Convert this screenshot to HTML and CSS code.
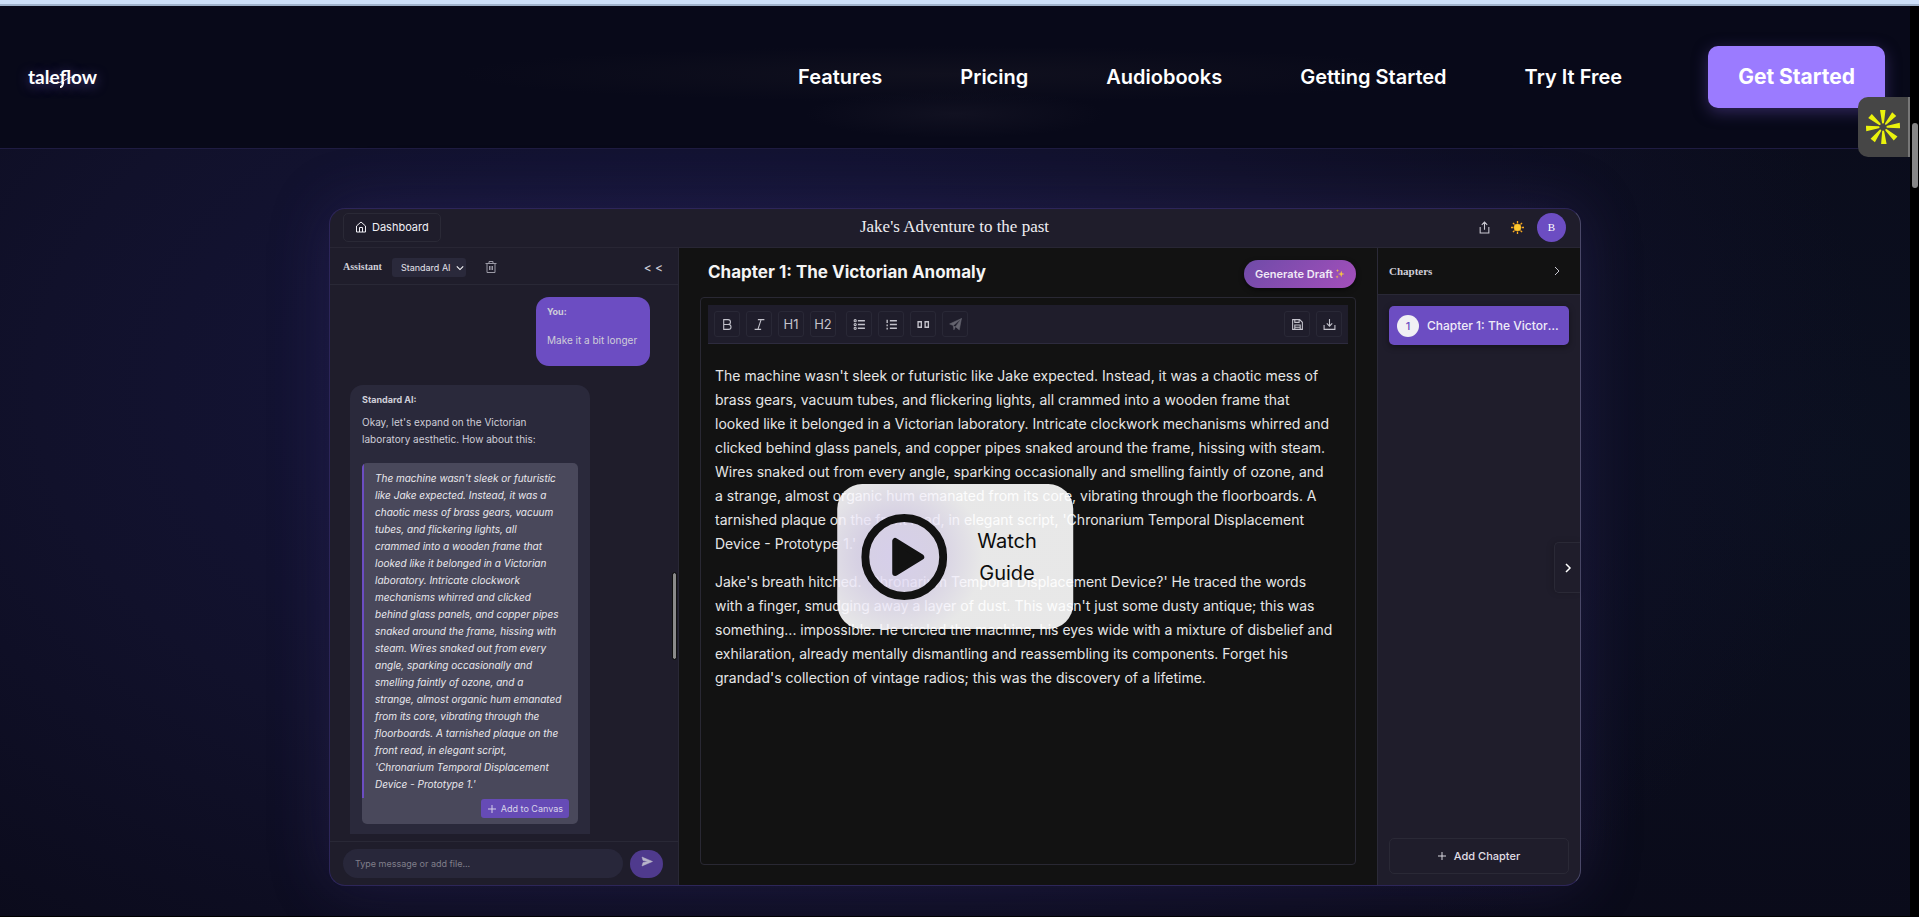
FILE: index.html
```html
<!DOCTYPE html>
<html lang="en">
<head>
<meta charset="utf-8">
<title>Taleflow</title>
<link rel="stylesheet" href="styles.css">
</head>
<body>
<div class="browser-edge"></div>
<div class="viewport">
<div class="page">
  <header class="site-nav">
    <a class="logo" href="#">taleflow<svg class="logo-swoosh" viewBox="0 0 30 14" aria-hidden="true"><path d="M1 6C7 9 12 8 17 5S24 2 27 2" fill="none" stroke="#fff" stroke-width="1"/><path d="M15 7c0 3-1 5-3 5" fill="none" stroke="#fff" stroke-width="2"/></svg></a>
    <nav class="nav-links">
      <a href="#">Features</a>
      <a href="#">Pricing</a>
      <a href="#">Audiobooks</a>
      <a href="#">Getting Started</a>
      <a href="#">Try It Free</a>
    </nav>
    <a class="get-started" href="#">Get Started</a>
  </header>

  <button class="widget" aria-label="Open widget">
    <svg viewBox="0 0 34 34" width="34" height="34" aria-hidden="true"><g fill="#eaf20c"><path id="ray" d="M14 0h5.500l-1.500 12.500c-.1 1.400-1.800 1.400-2 .2z"/><use href="#ray" transform="rotate(42 17 17)"/><use href="#ray" transform="rotate(86 17 17)"/><use href="#ray" transform="rotate(133 17 17)"/><use href="#ray" transform="rotate(178 17 17)"/><use href="#ray" transform="rotate(218 17 17)"/><use href="#ray" transform="rotate(266 17 17)"/><use href="#ray" transform="rotate(311 17 17)"/></g></svg>
  </button>

  <main class="hero">
    <section class="app">
      <div class="app-bar">
        <button class="dashboard"><svg viewBox="0 0 24 24" class="i12"><path d="M3 10 12 2l9 8v12H3zM9 22v-9h6v9"/></svg>Dashboard</button>
        <h2 class="book-title">Jake's Adventure to the past</h2>
        <div class="bar-actions">
          <button class="plain" aria-label="Share"><svg viewBox="0 0 24 24" class="i14"><path d="M4 11v11h16V11M12 16V2M7 7l5-5 5 5"/></svg></button>
          <button class="plain" aria-label="Light theme"><svg viewBox="0 0 24 24" class="i14"><g stroke="#f6a821" stroke-width="2.400"><path d="M12 0v4M12 20v4M0 12h4M20 12h4M3.500 3.500l3 3M17.500 17.500l3 3M20.500 3.500l-3 3M6.500 17.500l-3 3"/></g><circle cx="12" cy="12" r="6.500" fill="#fdc92f" stroke="#f8b023" stroke-width="1"/></svg></button>
          <span class="avatar">B</span>
        </div>
      </div>

      <div class="app-body">
        <aside class="assistant">
          <div class="assistant-head">
            <label class="serif-label" for="model">Assistant</label>
            <div class="select-wrap">
              <select id="model"><option>Standard AI</option></select>
              <svg viewBox="0 0 10 10" class="i8"><path d="M1 3l4 4 4-4" stroke-width="1.300"/></svg>
            </div>
            <button class="plain trash" aria-label="Clear chat"><svg viewBox="0 0 24 24" class="i12"><path d="M1 5h22M8 5V1h8v4M4 5v18h16V5M9 10v8M12 10v8M15 10v8"/></svg></button>
            <button class="plain collapse">&lt; &lt;</button>
          </div>
          <div class="chat">
            <div class="msg-user"><strong>You:</strong><p>Make it a bit longer</p></div>
            <div class="msg-ai">
              <strong>Standard AI:</strong>
              <p>Okay, let's expand on the Victorian<br>laboratory aesthetic. How about this:</p>
              <div class="quote">
                <blockquote>The machine wasn't sleek or futuristic<br>like Jake expected. Instead, it was a<br>chaotic mess of brass gears, vacuum<br>tubes, and flickering lights, all<br>crammed into a wooden frame that<br>looked like it belonged in a Victorian<br>laboratory. Intricate clockwork<br>mechanisms whirred and clicked<br>behind glass panels, and copper pipes<br>snaked around the frame, hissing with<br>steam. Wires snaked out from every<br>angle, sparking occasionally and<br>smelling faintly of ozone, and a<br>strange, almost organic hum emanated<br>from its core, vibrating through the<br>floorboards. A tarnished plaque on the<br>front read, in elegant script,<br>'Chronarium Temporal Displacement<br>Device - Prototype 1.'</blockquote>
                <button class="add-canvas"><svg viewBox="0 0 10 10" class="i8"><path d="M5 0v10M0 5h10" stroke-width="1.200"/></svg>Add to Canvas</button>
              </div>
            </div>
            <span class="chat-scroll"></span>
          </div>
          <form class="composer">
            <input type="text" placeholder="Type message or add file..." aria-label="Message">
            <button type="button" aria-label="Send"><svg viewBox="0 0 24 24" class="i12"><path d="M2 2l21 9L2 20l2-7 10-2L4 9z" fill="currentColor" stroke-width="1"/></svg></button>
          </form>
        </aside>

        <section class="editor">
          <div class="editor-head">
            <h1>Chapter 1: The Victorian Anomaly</h1>
            <button class="generate">Generate Draft <svg viewBox="0 0 12 12" class="i10"><g fill="#f5c344" stroke="none"><path d="M7.500 2l1 3 3 1-3 1-1 3-1-3-3-1 3-1z"/><path d="M3 0l.5 1.500L5 2l-1.500.5L3 4l-.5-1.500L1 2l1.500-.5zM2.500 7.500l.5 1.500 1.500.5L3 10l-.5 1.500L2 10 .5 9.500 2 9z"/></g></svg></button>
          </div>
          <div class="sheet">
            <div class="toolbar">
              <div class="tools">
                <button aria-label="Bold"><svg viewBox="0 0 24 24" class="i14"><path d="M5 3h8a4.500 4.500 0 010 9H5zM5 12h9a4.500 4.500 0 010 9H5z"/></svg></button>
                <button aria-label="Italic"><svg viewBox="0 0 24 24" class="i14"><path d="M9 3h12M3 21h12M15 3L9 21"/></svg></button>
                <button>H1</button>
                <button>H2</button>
              </div>
              <div class="tools">
                <button aria-label="Bullet list"><svg viewBox="0 0 24 24" class="i14"><path d="M9 5h13M9 12h13M9 19h13" stroke-width="2.500"/><circle cx="4" cy="5" r="2"/><circle cx="4" cy="12" r="2"/><circle cx="4" cy="19" r="2"/></svg></button>
                <button aria-label="Numbered list"><svg viewBox="0 0 24 24" class="i14"><path d="M9 5h13M9 12h13M9 19h13" stroke-width="2.500"/><path d="M4 3v6M4 12v3M4 18v3" stroke-width="2.500"/></svg></button>
                <button aria-label="Quote"><svg viewBox="0 0 24 24" class="i14"><path d="M2 7h6v10H2zM15 7h6v10h-6z" stroke-width="2.500"/></svg></button>
                <button class="dim" aria-label="Send selection"><svg viewBox="0 0 24 24" class="i14"><path d="M23 1L1 11l7 3zM23 1l-4 21-7-6zM8 14l1 8 3-6" fill="currentColor" stroke-width="1"/></svg></button>
              </div>
              <div class="tools tools-end">
                <button aria-label="Save"><svg viewBox="0 0 24 24" class="i14"><path d="M3 3h13l5 5v13H3zM7 3v5h8V3M7 21v-8h10v8M7 17h10"/></svg></button>
                <button aria-label="Download"><svg viewBox="0 0 24 24" class="i14"><path d="M2 13v8h20v-8M12 2v13M7 10l5 5 5-5"/></svg></button>
              </div>
            </div>
            <article class="prose">
              <p>The machine wasn't sleek or futuristic like Jake expected. Instead, it was a chaotic mess of<br>brass gears, vacuum tubes, and flickering lights, all crammed into a wooden frame that<br>looked like it belonged in a Victorian laboratory. Intricate clockwork mechanisms whirred and<br>clicked behind glass panels, and copper pipes snaked around the frame, hissing with steam.<br>Wires snaked out from every angle, sparking occasionally and smelling faintly of ozone, and<br>a strange, almost organic hum emanated from its core, vibrating through the floorboards. A<br>tarnished plaque on the front read, in elegant script, 'Chronarium Temporal Displacement<br>Device - Prototype 1.'</p>
              <p>Jake's breath hitched. 'Chronarium Temporal Displacement Device?' He traced the words<br>with a finger, smudging away a layer of dust. This wasn't just some dusty antique; this was<br>something... impossible. He circled the machine, his eyes wide with a mixture of disbelief and<br>exhilaration, already mentally dismantling and reassembling its components. Forget his<br>grandad's collection of vintage radios; this was the discovery of a lifetime.</p>
            </article>
          </div>
        </section>

        <aside class="chapters">
          <div class="chapters-head"><span class="serif-label">Chapters</span><button class="plain" aria-label="Hide chapters"><svg viewBox="0 0 10 10" class="i10"><path d="M3 1l4 4-4 4" stroke-width="1"/></svg></button></div>
          <button class="chapter"><span class="chapter-no">1</span><span class="chapter-name">Chapter 1: The Victorian Anomaly</span></button>
          <button class="add-chapter"><svg viewBox="0 0 10 10" class="i8"><path d="M5 0v10M0 5h10" stroke-width="1.200"/></svg>Add Chapter</button>
          <button class="drawer-tab" aria-label="Toggle drawer"><svg viewBox="0 0 10 10" class="i10"><path d="M3 1l4 4-4 4" stroke-width="1.500"/></svg></button>
        </aside>
      </div>

      <button class="watch">
        <svg class="play" viewBox="0 0 86 86" aria-hidden="true"><circle cx="43" cy="43" r="39" fill="none" stroke="#121212" stroke-width="8"/><path d="M34 27v32l26-16z" fill="#121212" stroke="#121212" stroke-width="6" stroke-linejoin="round"/></svg>
        <span>Watch<br>Guide</span>
      </button>
    </section>
  </main>
</div>
<div class="scroll-track"><span class="scroll-thumb"></span></div>
</div>
</body>
</html>
```

FILE: styles.css
```css
* { box-sizing: border-box; }

body {
  margin: 0;
  height: 100vh;
  overflow: hidden;
  display: flex;
  flex-direction: column;
  background: #000;
  color: #fff;
  font-family: Inter, "Liberation Sans", sans-serif;
}

h1, h2, p, blockquote { margin: 0; }
button, input, select { font: inherit; color: inherit; margin: 0; }
button { cursor: pointer; padding: 0; border: 0; background: none; }
svg { display: block; fill: none; stroke: currentColor; stroke-width: 2; }
.widget svg, .play { stroke: none; }
.i8 { width: 8px; height: 8px; }
.i10 { width: 10px; height: 10px; }
.i12 { width: 12px; height: 12px; }
.i14 { width: 13px; height: 13px; }
.plain { color: #c9c8d2; display: grid; place-items: center; }

.browser-edge {
  flex: none;
  height: 6px;
  background: #cddff8;
  border-bottom: 2px solid #9fb2cb;
}

.viewport { flex: 1; min-height: 0; display: flex; }

.page {
  flex: 1;
  position: relative;
  min-width: 0;
  border-bottom: 1px solid #000;
  background:
    radial-gradient(ellipse 62% 80% at 36% 42%, #16163e 0, #11112b 55%, transparent 100%),
    radial-gradient(ellipse 40% 60% at 96% 50%, #0b1020, transparent),
    #0a0a19;
}

.scroll-track { flex: none; width: 9px; background: #000; padding: 117px 1px 0 2px; }
.scroll-thumb { display: block; height: 65px; border-radius: 3px; background: #878787; }

.site-nav {
  display: flex;
  align-items: center;
  height: 143px;
  padding: 0 25px 0 28px;
  border-bottom: 1px solid #1f1c42;
  background:
    radial-gradient(ellipse 500px 28px at 50% 68px, #10101e, transparent),
    radial-gradient(ellipse 150px 24px at 50% 108px, #111121, transparent),
    #080919;
}

.logo {
  position: relative;
  margin-right: auto;
  color: #fff;
  font: 700 19px/24px Lato, sans-serif;
  text-decoration: none;
  text-shadow: 0 2px 12px #4c3f88;
}
.logo-swoosh { position: absolute; left: 20px; top: 10px; width: 30px; height: 14px; }

.nav-links { display: flex; gap: 78px; margin-right: 86px; }
.nav-links a { color: #fff; text-decoration: none; font-size: 20px; line-height: 24px; font-weight: 600; }

.get-started {
  padding: 16px 30px;
  border-radius: 10px;
  background: #9b7bff;
  color: #fff;
  font-size: 21px;
  line-height: 30px;
  font-weight: 700;
  text-decoration: none;
  box-shadow: 0 4px 15px #5b45a080;
}

.widget {
  position: absolute;
  z-index: 3;
  right: 0;
  top: 91px;
  width: 52px;
  height: 60px;
  padding-left: 8px;
  border-radius: 10px 0 0 10px;
  border-right: 2px solid #777;
  background: #464646;
}

.hero { padding: 59px 24px 0; }

.app {
  position: relative;
  max-width: 1252px;
  min-height: 678px;
  margin: 0 auto;
  display: flex;
  flex-direction: column;
  border: 1px solid #2d2659;
  border-right-color: #4a4868;
  border-radius: 16px;
  background: #1f1d2b;
  box-shadow: 0 0 60px #4a3c9040;
}

.app-bar {
  display: grid;
  grid-template-columns: 1fr auto 1fr;
  align-items: center;
  height: 39px;
  padding: 0 14px 2px 13px;
  border-bottom: 1px solid #282634;
}
.dashboard {
  justify-self: start;
  display: flex;
  align-items: center;
  gap: 5px;
  height: 29px;
  padding: 0 11px;
  border: 1px solid #2a2936;
  border-radius: 5px;
  color: #f0eff5;
  font-size: 11px;
}
.book-title { font: 500 17px/24px "Liberation Serif", serif; color: #eeedf2; }
.bar-actions { justify-self: end; display: flex; align-items: center; gap: 20px; }
.avatar {
  width: 29px;
  height: 29px;
  margin-left: -7px;
  border-radius: 50%;
  background: #6c4dc2;
  font: 11px/29px "Liberation Serif", serif;
  text-align: center;
}

.app-body { flex: 1; display: grid; grid-template-columns: 349px minmax(0, 1fr) 203px; }

.assistant { display: flex; flex-direction: column; border-right: 1px solid #292836; }
.assistant-head {
  display: flex;
  align-items: center;
  height: 37px;
  padding: 2px 15px 0 13px;
  border-bottom: 1px solid #292836;
}
.serif-label { font: 700 11px/16px "Liberation Serif", serif; color: #d0cfd8; }
.assistant-head .serif-label { font-size: 10px; }
.select-wrap {
  position: relative;
  margin: 0 19px 0 10px;
  border-radius: 3px;
  background: #2a293b;
}
.select-wrap select {
  appearance: none;
  display: block;
  width: 74px;
  height: 19px;
  padding: 0 0 0 9px;
  border: 0;
  background: none;
  color: #e3e2ea;
  font-size: 9px;
}
.select-wrap svg { position: absolute; right: 2px; top: 6px; }
.trash { color: #9b9aa6; }
.collapse { margin-left: auto; font-size: 12px; font-weight: 500; }

.chat {
  position: relative;
  flex: 1;
  display: flex;
  flex-direction: column;
  padding: 12px 28px 7px 20px;
  color: #cfced8;
  font-size: 10px;
  line-height: 17px;
}
.msg-user {
  align-self: flex-end;
  width: 114px;
  padding: 6px 0 17px 11px;
  border-radius: 13px;
  background: #6c4dc2;
  white-space: nowrap;
}
.msg-user strong, .msg-ai strong { display: block; font-size: 9px; font-weight: 700; }
.msg-user p { margin-top: 12px; }
.msg-ai {
  width: 240px;
  flex: 1;
  margin-top: 19px;
  padding: 6px 12px 9px;
  border-radius: 13px 13px 0 0;
  background: #2a293b;
}
.msg-ai p { margin-top: 6px; }
.quote {
  margin-top: 15px;
  padding-bottom: 6px;
  border-radius: 5px;
  overflow: hidden;
  background: #49485b;
}
blockquote {
  padding: 7px 0 5px 11px;
  border-left: 2px solid #6c4dc2;
  color: #e9e8ee;
  font-style: italic;
  white-space: nowrap;
}
.add-canvas {
  display: flex;
  align-items: center;
  gap: 5px;
  height: 19px;
  margin: 1px 9px 0 auto;
  padding: 0 6px 0 7px;
  border-radius: 3px;
  background: #664bb6;
  font-size: 9px;
  color: #d9d5ea;
}
.chat-scroll {
  position: absolute;
  right: 2px;
  top: 288px;
  width: 3px;
  height: 86px;
  border-radius: 2px;
  background: #8a8a8a;
  outline: 1px solid #111;
}

.composer {
  display: flex;
  align-items: center;
  gap: 7px;
  height: 44px;
  padding: 0 15px 0 13px;
  border-top: 1px solid #292836;
}
.composer input {
  flex: 1;
  min-width: 0;
  height: 29px;
  padding: 0 12px;
  border: 0;
  border-radius: 15px;
  background: #28273a;
  font-size: 9px;
}
.composer input::placeholder { color: #807f8a; }
.composer button {
  display: grid;
  place-items: center;
  width: 33px;
  height: 28px;
  padding-bottom: 3px;
  border-radius: 14px;
  background: #4f3a8d;
  color: #b9b5ca;
}

.editor {
  display: flex;
  flex-direction: column;
  padding: 12px 21px 20px;
  background: #121212;
}
.editor-head { display: flex; justify-content: space-between; padding-left: 8px; }
.editor-head h1 { font-size: 17px; line-height: 24px; font-weight: 700; color: #f4f4f4; }
.generate {
  display: flex;
  align-items: center;
  gap: 2px;
  height: 28px;
  padding: 0 11px;
  border-radius: 14px;
  background: linear-gradient(135deg, #6f4ba8, #a44fbb);
  box-shadow: 0 2px 5px #0008;
  font-size: 11px;
  font-weight: 600;
  color: #f1eaf6;
}
.sheet {
  flex: 1;
  margin-top: 9px;
  padding: 7px;
  border: 1px solid #292833;
  border-radius: 4px;
}
.toolbar {
  display: flex;
  align-items: center;
  gap: 10px;
  height: 39px;
  padding: 0 6px;
  border-bottom: 1px solid #2d2b3e;
  background: #1f1d2b;
}
.tools { display: flex; gap: 6px; }
.tools-end { margin-left: auto; }
.tools button {
  display: grid;
  place-items: center;
  width: 26px;
  height: 26px;
  border: 1px solid #292836;
  border-radius: 3px;
  color: #c4c3cc;
  font-size: 13px;
}
.tools .dim { color: #65646f; }
.prose {
  padding: 20px 7px 0;
  color: #e6e6e6;
  font-size: 14px;
  line-height: 24px;
  white-space: nowrap;
}
.prose p + p { margin-top: 14px; }

.chapters {
  position: relative;
  display: flex;
  flex-direction: column;
  border-left: 1px solid #2b2a38;
  padding-bottom: 11px;
}
.chapters-head {
  display: flex;
  align-items: center;
  justify-content: space-between;
  height: 47px;
  padding: 0 18px 0 11px;
  border-bottom: 1px solid #292836;
  background: #121212;
}
.chapter {
  display: flex;
  align-items: center;
  gap: 8px;
  height: 39px;
  margin: 11px 11px 0;
  padding: 0 10px 0 8px;
  border-radius: 5px;
  background: #6c4dc2;
  box-shadow: 0 2px 6px #0006;
  font-size: 12px;
  font-weight: 500;
}
.chapter-no {
  flex: none;
  width: 22px;
  height: 22px;
  border-radius: 50%;
  background: #f1f0f4;
  color: #6c4dc2;
  font-size: 11px;
  line-height: 22px;
  text-align: center;
}
.chapter-name { overflow: hidden; text-overflow: ellipsis; white-space: nowrap; color: #efecf8; }
.add-chapter {
  display: flex;
  align-items: center;
  justify-content: center;
  gap: 8px;
  height: 36px;
  margin: auto 11px 0;
  border: 1px solid #2a2936;
  border-radius: 5px;
  color: #e0dfe6;
  font-size: 11px;
  font-weight: 500;
}
.drawer-tab {
  position: absolute;
  right: 0;
  top: 294px;
  display: grid;
  place-items: center;
  width: 26px;
  height: 51px;
  border: 1px solid #2a2936;
  border-right: 0;
  border-radius: 5px 0 0 5px;
  background: #1f1d2b;
  box-shadow: -2px 0 6px #0002;
}

.watch {
  position: absolute;
  left: 50%;
  top: 275px;
  transform: translateX(-50%);
  display: flex;
  align-items: center;
  gap: 30px;
  height: 145px;
  padding: 0 36px 0 24px;
  border-radius: 25px;
  background: radial-gradient(circle at 60px 72px, #e4dcfaee 0, #e8e2f6ea 40px, #ffffffe6 85px);
  color: #0c0c0c;
  font-size: 20px;
  line-height: 32px;
}
.play { width: 86px; height: 86px; }
```
